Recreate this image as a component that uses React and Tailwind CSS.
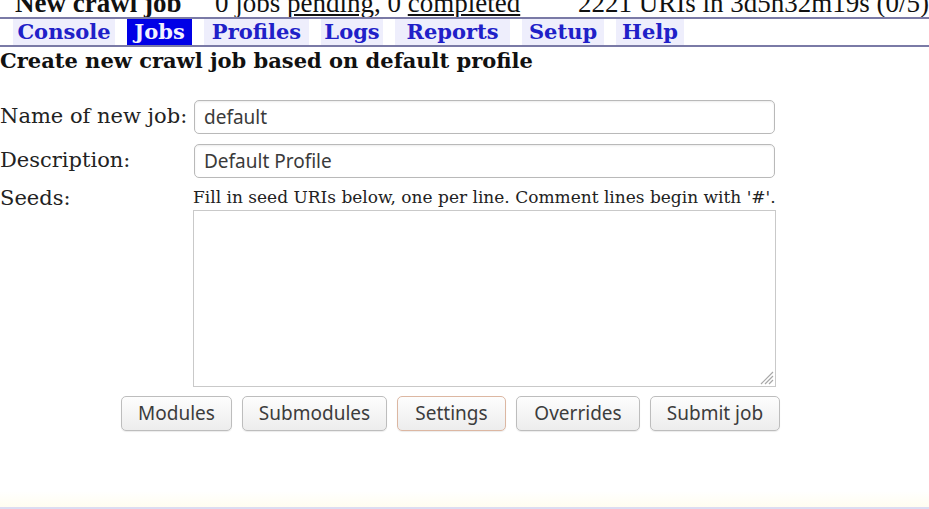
const tabs = [
  { label: "Console", w: "w-[102px]" },
  { label: "Jobs", w: "w-[65px]", active: true },
  { label: "Profiles", w: "w-[105px]" },
  { label: "Logs", w: "w-[62px]" },
  { label: "Reports", w: "w-[115px]" },
  { label: "Setup", w: "w-[82px]" },
  { label: "Help", w: "w-[68px]" },
];

const buttons = [
  { label: "Modules", w: "w-[111px]" },
  { label: "Submodules", w: "w-[145px]" },
  { label: "Settings", w: "w-[109px]", focus: true },
  { label: "Overrides", w: "w-[124px]" },
  { label: "Submit job", w: "w-[130px]" },
];

const serif = "font-['DejaVu_Serif',serif]";
const ubuntu = "font-['Noto_Sans',sans-serif]";

const Field = ({ label, value }) => (
  <div className="flex items-center h-[34px]">
    <div className={`w-[194px] text-[21px] text-[#222] ${serif}`}>{label}</div>
    <div
      className={`w-[581px] h-[34px] rounded-[5px] border border-[#b9b9b9] bg-white shadow-[inset_0_1px_2px_rgba(0,0,0,0.08)] flex items-center pl-[9px] text-[19px] text-[#3a3a3a] ${ubuntu}`}
    >
      {value}
    </div>
  </div>
);

export default function App() {
  return (
    <div className="w-[929px] h-[509px] overflow-hidden bg-white flex flex-col text-[#111]">
      {/* status strip, cut off at the top */}
      <div className="h-[17px] overflow-hidden shrink-0">
        <div className="flex whitespace-nowrap text-[27px] leading-[27px] mt-[-10px] font-['Liberation_Serif',serif] text-[#111]">
          <div className="ml-[15px] w-[200px] font-bold">New crawl job</div>
          <div className="w-[363px]">
            0 jobs <span className="underline">pending</span>, 0{" "}
            <span className="underline">completed</span>
          </div>
          <div>2221 URIs in 3d5h32m19s (0/5)</div>
        </div>
      </div>

      {/* nav */}
      <div className="h-[30px] shrink-0 border-y-2 border-[#7a7aa6] flex items-stretch gap-[12px] pl-[13px] bg-white">
        {tabs.map((t) => (
          <div
            key={t.label}
            className={`${t.w} flex items-center justify-center text-[21px] font-bold ${serif} ${
              t.active ? "bg-[#0000e6] text-[#f2f2ff]" : "bg-[#eeeefc] text-[#2020c8]"
            }`}
          >
            {t.label}
          </div>
        ))}
      </div>

      <h1 className={`text-[21px] font-bold leading-[26px] mt-[1px] ${serif} text-[#111]`}>
        Create new crawl job based on default profile
      </h1>

      <div className="mt-[26px] flex flex-col gap-[10px]">
        <Field label="Name of new job:" value="default" />
        <Field label="Description:" value="Default Profile" />
      </div>

      <div className="flex mt-[7px]">
        <div className={`w-[193px] text-[21px] text-[#222] leading-[26px] ${serif}`}>Seeds:</div>
        <div className="flex flex-col">
          <div className={`text-[17px] leading-[25px] text-[#222] whitespace-nowrap ${serif}`}>
            Fill in seed URIs below, one per line. Comment lines begin with '#'.
          </div>
          <div className="relative w-[583px] h-[177px] border border-[#c9c9c9] bg-white">
            <svg
              className="absolute right-[1px] bottom-[1px]"
              width="16"
              height="16"
              viewBox="0 0 16 16"
            >
              <path d="M15 3 L3 15 M15 7 L7 15 M15 11 L11 15" stroke="#a8a8a8" strokeWidth="1.2" />
            </svg>
          </div>
        </div>
      </div>

      <div className="flex gap-[10px] ml-[121px] mt-[9px]">
        {buttons.map((b) => (
          <div
            key={b.label}
            className={`${b.w} h-[35px] rounded-[5px] border ${
              b.focus ? "border-[#dcb7a2]" : "border-[#bdbdbd]"
            } bg-gradient-to-b from-[#fdfdfd] to-[#ededed] shadow-[0_1px_1px_rgba(0,0,0,0.08)] flex items-center justify-center text-[19px] text-[#3c3c3c] ${ubuntu}`}
          >
            {b.label}
          </div>
        ))}
      </div>

      <div className="flex-1" />
      <div className="h-[16px] bg-gradient-to-b from-white to-[#fffdf0]" />
      <div className="h-[2px] bg-[#dcdcf2]" />
    </div>
  );
}
